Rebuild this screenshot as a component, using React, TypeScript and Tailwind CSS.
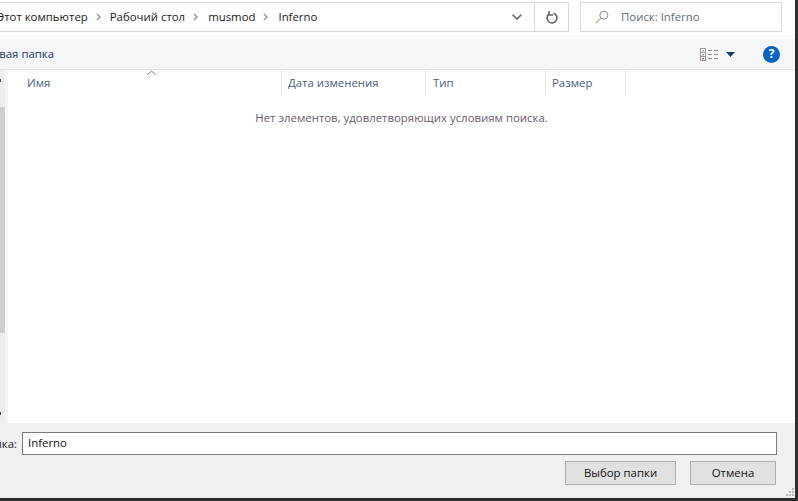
const font = { fontFamily: '"Open Sans", "Noto Sans", sans-serif' };

function Chevron() {
  return (
    <svg width="7" height="8" viewBox="0 0 7 8" className="shrink-0">
      <path d="M2 1l3 3-3 3" fill="none" stroke="#9a9a9a" strokeWidth="1.6" />
    </svg>
  );
}

function Column({ label, width, pad }: { label: string; width: string; pad: string }) {
  return (
    <div className={`${width} ${pad} h-[25px] shrink-0 flex items-center border-r border-[#e5e5e5] text-[#4c607a]`}>
      {label}
    </div>
  );
}

export default function App() {
  return (
    <div className="w-[798px] h-[501px] overflow-hidden bg-[#2e2e2e] text-[11.4px] leading-[16px]" style={font}>
      <div className="w-[795px] h-[498px] flex flex-col bg-white">
        {/* address row */}
        <div className="h-[39px] shrink-0 pt-[2px] flex items-start">
          <div className="w-[569px] h-[30px] shrink-0 flex items-center border-y border-r border-[#d9d9d9] text-[#1a1a1a]">
            <span className="ml-[-3px]">Этот компьютер</span>
            <span className="ml-[7px]"><Chevron /></span>
            <span className="ml-[8px]">Рабочий стол</span>
            <span className="ml-[7px]"><Chevron /></span>
            <span className="ml-[9px]">musmod</span>
            <span className="ml-[7px]"><Chevron /></span>
            <span className="ml-[9px]">Inferno</span>
            <div className="ml-auto w-[34px] h-full flex items-center justify-center">
              <svg width="12" height="8" viewBox="0 0 12 8">
                <path d="M1.5 1.5L6 6l4.5-4.5" fill="none" stroke="#6b6b6b" strokeWidth="1.6" />
              </svg>
            </div>
            <div className="w-[34px] h-full flex items-center justify-center border-l border-[#d9d9d9]">
              <svg width="14" height="15" viewBox="0 0 14 15">
                <path d="M8.5 3.2A5 5 0 1 1 4 4" fill="none" stroke="#666" strokeWidth="1.6" />
                <path d="M4 1v4h4" fill="none" stroke="#666" strokeWidth="1.6" />
              </svg>
            </div>
          </div>
          <div className="ml-[11px] w-[202px] h-[30px] shrink-0 flex items-center border border-[#d9d9d9] text-[#5f6b78]">
            <svg width="14" height="14" viewBox="0 0 14 14" className="ml-[14px]">
              <circle cx="8.8" cy="5.2" r="4" fill="none" stroke="#8a8a8a" />
              <path d="M5.8 8.2L1 13" stroke="#c9a27a" strokeWidth="1.1" />
            </svg>
            <span className="ml-[12px]">Поиск: Inferno</span>
          </div>
        </div>

        {/* toolbar */}
        <div className="h-[31px] shrink-0 flex items-center bg-[#f5f6f7] border-b border-[#e3e4e5] text-[#1f3a5c] overflow-hidden">
          <span className="ml-[-16px]">Новая папка</span>
          <svg width="19" height="13" viewBox="0 0 19 13" className="ml-auto">
            <rect x="0.5" y="0.5" width="5" height="12" fill="#fff" stroke="#9a9a9a" />
            <path d="M1 4.5h4M1 8.5h4" stroke="#9a9a9a" />
            <rect x="2" y="2" width="2" height="1.5" fill="#b9b9b9" />
            <rect x="2" y="6" width="2" height="1.5" fill="#6fa8dc" />
            <rect x="2" y="10" width="2" height="1.5" fill="#d9534f" />
            <path d="M8 2.5h4M14 2.5h4M8 6.5h4M14 6.5h4M8 10.5h4M14 10.5h4" stroke="#8c8c8c" />
          </svg>
          <svg width="9" height="5" viewBox="0 0 9 5" className="ml-[7px]">
            <path d="M0 0h9L4.5 5z" fill="#1f3a5c" />
          </svg>
          <div className="ml-[28px] mr-[15px] w-[17px] h-[17px] rounded-full bg-[#0a63bd] flex items-center justify-center text-white text-[12px] font-bold">
            ?
          </div>
        </div>

        {/* list area */}
        <div className="flex-1 flex min-h-0">
          <div className="w-[5px] shrink-0 flex flex-col bg-[#eeeeee]">
            <div className="mt-[9px] h-[3px] w-[1px] bg-[#555555]" />
            <div className="mt-[25px] h-[226px] bg-[#cdcdcd]" />
            <div className="mt-[79px] h-[3px] w-[1px] bg-[#555555]" />
          </div>
          <div className="w-[3px] shrink-0 bg-[#f5f5f5]" />
          <div className="flex-1 min-w-0 flex flex-col bg-white relative">
            <svg width="9" height="5" viewBox="0 0 9 5" className="absolute left-[139px] top-0">
              <path d="M0.5 4.5l4-3.5 4 3.5" fill="none" stroke="#777" />
            </svg>
            <div className="flex h-[25px] shrink-0">
              <Column label="Имя" width="w-[274px]" pad="pl-[19px]" />
              <Column label="Дата изменения" width="w-[144px]" pad="pl-[6px]" />
              <Column label="Тип" width="w-[120px]" pad="pl-[7px]" />
              <Column label="Размер" width="w-[80px]" pad="pl-[6px]" />
            </div>
            <div className="mt-[15px] text-center w-[787px] text-[#6d5a6c]">
              Нет элементов, удовлетворяющих условиям поиска.
            </div>
          </div>
        </div>

        {/* footer */}
        <div className="h-[75px] shrink-0 bg-[#f0f0f0] flex flex-col relative">
          <div className="mt-[9px] flex items-center h-[23px]">
            <div className="w-[22px] overflow-hidden flex justify-end whitespace-nowrap pr-[5px] text-[#1a1a1a] shrink-0">
              Папка:
            </div>
            <div className="w-[755px] h-[23px] border border-[#7a7a7a] bg-white flex items-center pl-[5px] pb-[1px] text-[#101010] shrink-0">
              Inferno
            </div>
          </div>
          <div className="mt-[6px] flex gap-[14px] pl-[565px]">
            <div className="w-[111px] h-[24px] bg-[#e1e1e1] border border-[#adadad] flex items-center justify-center text-[#111]">
              Выбор папки
            </div>
            <div className="w-[86px] h-[24px] bg-[#e1e1e1] border border-[#adadad] flex items-center justify-center text-[#111]">
              Отмена
            </div>
          </div>
          <svg width="10" height="10" viewBox="0 0 10 10" className="absolute right-0 bottom-[1px]">
            <path d="M7 1h2v2H7zM4 4h2v2H4zM7 4h2v2H7zM1 7h2v2H1zM4 7h2v2H4zM7 7h2v2H7z" fill="#b5b5b5" />
          </svg>
        </div>
      </div>
    </div>
  );
}
